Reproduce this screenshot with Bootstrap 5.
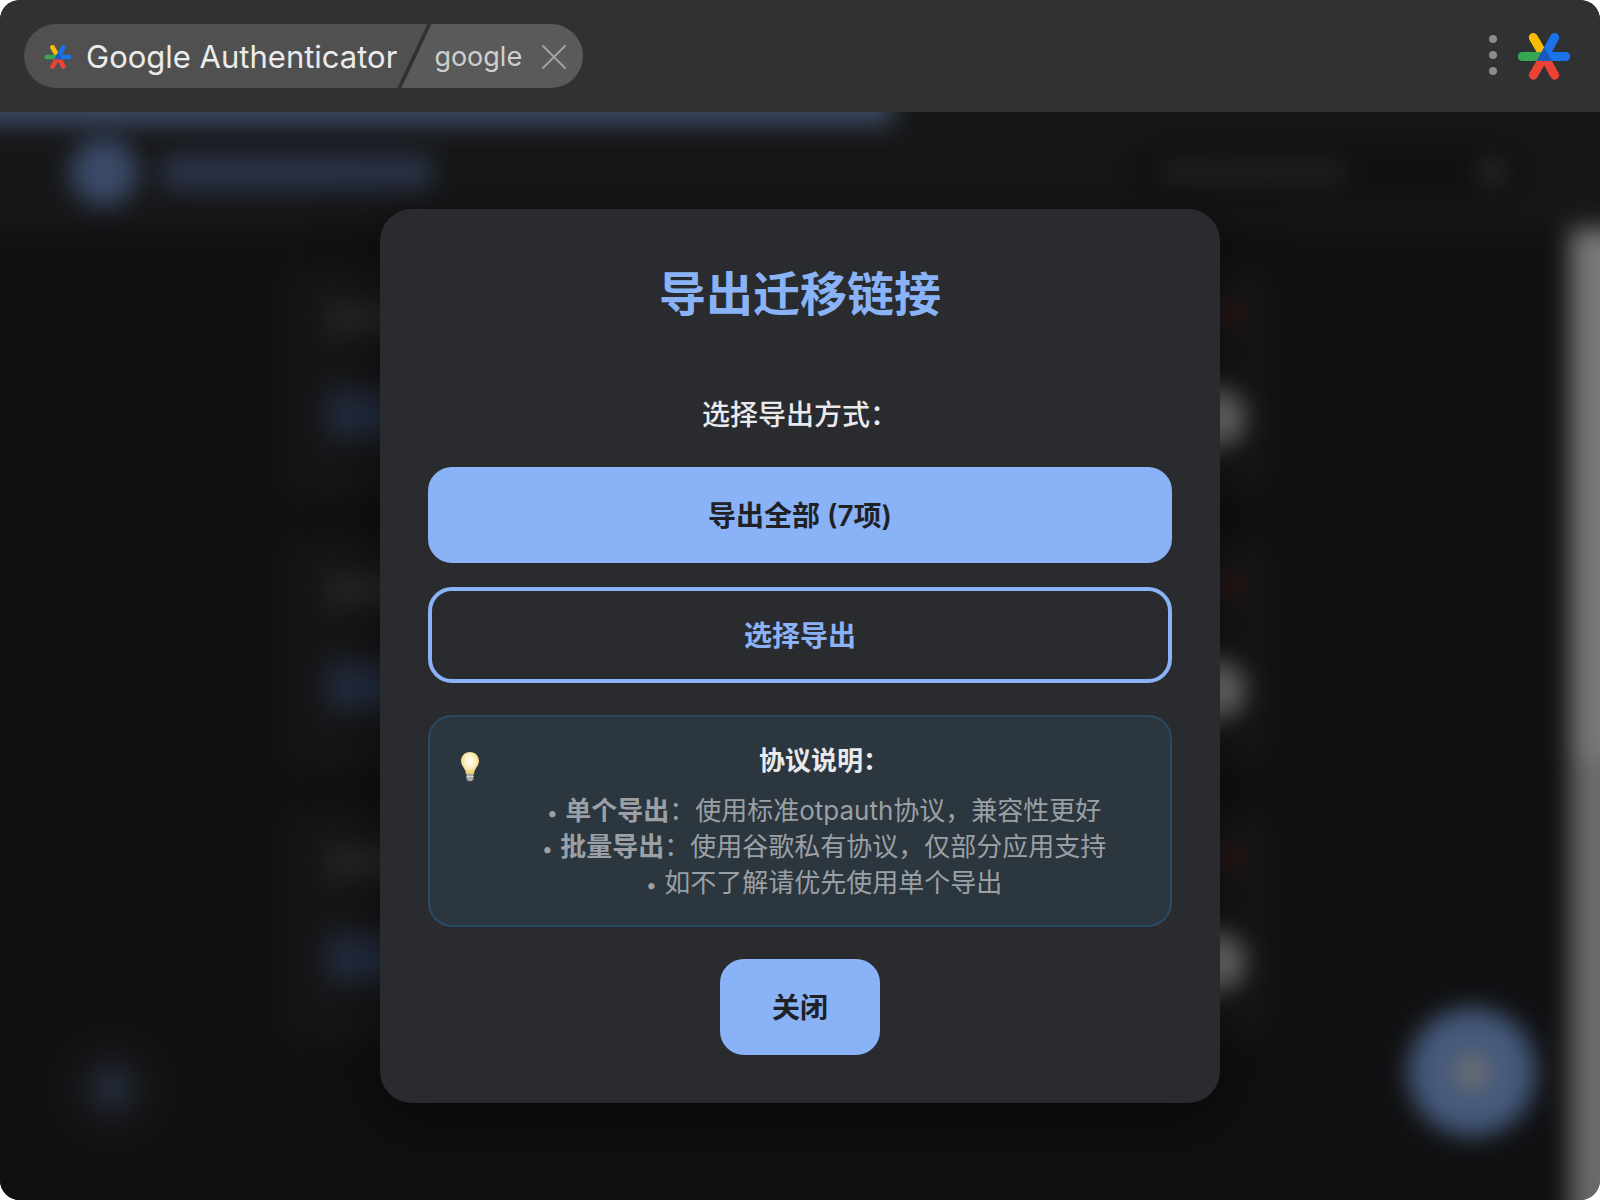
<!DOCTYPE html>
<html lang="zh-CN" data-bs-theme="dark">
<head>
<meta charset="utf-8">
<meta name="viewport" content="width=device-width, initial-scale=1">
<title>Google Authenticator</title>
<link href="https://cdn.jsdelivr.net/npm/bootstrap@5.3.0/dist/css/bootstrap.min.css" rel="stylesheet">
<style>
  html { background: #fff; }
  body { background: #fff; font-family: Inter, "Noto Sans CJK SC", sans-serif; }
  .app-window { min-height: 100vh; border-radius: 20px; background: #202124; }

  /* launcher bar */
  .launcher { background: #303133; padding: 24px; }
  .crumbs { height: 64px; border-radius: 32px; }
  .crumb-app { background: #505050; color: #ebebeb; font-size: 31px; padding: 2px 30px 0 20px; gap: 14px;
    clip-path: polygon(0 0, 100% 0, calc(100% - 30px) 100%, 0 100%); }
  .crumb-query { background: #5a5a5a; color: #cfcfcf; font-size: 27px; margin-left: -26px; padding: 2px 16px 0 33px; gap: 19px;
    clip-path: polygon(30px 0, 100% 0, 100% 100%, 0 100%); }
  .bar-btn { background: none; border: 0; padding: 0; line-height: 0; }
  .bar-tools { gap: 20px; padding-right: 6px; }

  /* stacked layers: blurred page behind, dialog in front */
  .stage { display: grid; overflow: hidden; }
  .stage > * { grid-area: 1 / 1; min-width: 0; }
  /* the page layer bleeds 40px past every side so the blur has no soft rim */
  .page-layer { margin: -40px; background: #202124; filter: blur(12px); }
  .head-strip { background: #2d2e31; }
  .progress-line { height: 52px; width: 932px; background: #7a98cf; }
  .page-head { height: 105px; padding: 0 108px 10px 110px; }
  .ghost-logo { width: 68px; height: 68px; border-radius: 50%; background: #7494cf; }
  .ghost-title { width: 270px; height: 34px; background: #566a90; border-radius: 6px; }
  .ghost-search { width: 400px; height: 64px; border-radius: 32px; background: #202124; padding: 0 24px; }
  .ghost-hint { width: 190px; height: 22px; background: #434343; }
  .ghost-lens { width: 30px; height: 30px; border-radius: 50%; background: #505257; }
  .ghost-list { width: 980px; margin-left: 330px; padding-top: 36px; gap: 40px; }
  .ghost-item { height: 232px; border-radius: 24px; background: #2c2d2f; padding: 38px 26px 49px 38px; }
  .ghost-name { width: 150px; height: 28px; background: #505050; }
  .ghost-code { width: 260px; height: 48px; background: #46587c; margin-bottom: 10px; }
  .ghost-trash { width: 32px; height: 20px; background: #6a2f2a; }
  .ghost-ring { width: 60px; height: 60px; border-radius: 50%; background: #ececec; }
  .ghost-scroll { width: 70px; background: linear-gradient(#f0f0f0 0 526px, #d4d4d4 534px); }
  .float-mini, .float-add { position: absolute; border-radius: 50%; display: grid; place-items: center; }
  .float-mini { left: 104px; bottom: 104px; width: 96px; height: 96px; background: #2c2d30; }
  .float-mini i { width: 40px; height: 40px; border-radius: 50%; background: #48587a; }
  .float-add { right: 104px; bottom: 104px; width: 128px; height: 128px; background: #8ab4f8; }
  .float-add i { width: 36px; height: 36px; border-radius: 50%; background: #dfe0e0; }

  /* dialog */
  .scrim { background: rgba(0,0,0,.5); padding: 97px 16px; z-index: 1; }
  .export-box { width: 840px; max-width: 100%; background: #2a2b2e; border-radius: 32px; padding: 48px;
    color: #e8eaed; box-shadow: 0 16px 64px rgba(0,0,0,.5); }
  .export-box h1 { font-size: 47px; font-weight: 600; line-height: 74px; color: #89b2f7; margin-bottom: 60px; }
  .ask { font-size: 28px; font-weight: 500; line-height: 48px; margin-bottom: 28px; }
  .act { height: 96px; border-radius: 24px; font-size: 28px; font-weight: 600; border-width: 4px; padding: 8px 16px 6px; }
  .act-fill, .act-fill:hover { background: #89b2f7; border-color: #89b2f7; color: #202124; }
  .act-line, .act-line:hover { color: #89b2f7; border-color: #89b2f7; }
  .act-close { width: 160px; }
  .tips { border: 2px solid #2b4a63; border-radius: 24px; background: #2c363e; padding: 24px 28px; margin: 32px 0; gap: 24px;
    font-size: 26px; line-height: 36px; color: #9aa0a6; }
  .tips h2 { font-size: 26px; font-weight: 600; line-height: 40px; color: #e8eaed; margin-bottom: 12px; }
  .tips b { font-weight: 600; }
  .dot { font-size: 20px; line-height: 1; }
  .bulb { margin-top: 10px; }
</style>
<script src="https://cdn.jsdelivr.net/npm/bootstrap@5.3.0/dist/js/bootstrap.bundle.min.js"></script>
</head>
<body>
<svg width="0" height="0" class="position-absolute" aria-hidden="true">
  <symbol id="star" viewBox="174 98 156 140">
    <g stroke-width="27" stroke-linecap="round" fill="none">
      <path d="M220 111L253 168" stroke="#fbbc04"/>
      <path d="M187 168H245" stroke="#34a853"/>
      <path d="M220 224L253 168L284 224" stroke="#ea4335"/>
      <path d="M317 168H253L284 111" stroke="#1a73e8" stroke-linejoin="round"/>
    </g>
    <path d="M253 141L276 181H230Z" fill="#185abc"/>
  </symbol>
</svg>
<div class="app-window d-flex flex-column overflow-hidden">
  <header class="launcher d-flex align-items-center justify-content-between">
    <div class="crumbs d-flex overflow-hidden">
      <div class="crumb-app d-flex align-items-center text-nowrap">
        <svg width="28" height="24" aria-hidden="true"><use href="#star"/></svg>
        <span>Google Authenticator</span>
      </div>
      <div class="crumb-query d-flex align-items-center">
        <span>google</span>
        <button class="bar-btn" type="button" aria-label="清除">
          <svg width="26" height="26" viewBox="0 0 26 26"><path d="M2 2L24 24M24 2L2 24" stroke="#a2a2a2" stroke-width="2" stroke-linecap="round"/></svg>
        </button>
      </div>
    </div>
    <div class="bar-tools d-flex align-items-center">
      <button class="bar-btn" type="button" aria-label="更多">
        <svg width="10" height="44" viewBox="0 0 10 44" fill="#8c8c8c"><circle cx="5" cy="5" r="4"/><circle cx="5" cy="21" r="4"/><circle cx="5" cy="37" r="4"/></svg>
      </button>
      <svg width="52" height="47" aria-hidden="true"><use href="#star"/></svg>
    </div>
  </header>

  <main class="stage flex-grow-1">
    <div class="page-layer position-relative d-flex flex-column" aria-hidden="true">
      <div class="head-strip">
        <div class="progress-line"></div>
        <div class="page-head d-flex align-items-center justify-content-between">
          <div class="d-flex align-items-center gap-4"><div class="ghost-logo"></div><div class="ghost-title"></div></div>
          <div class="ghost-search d-flex align-items-center justify-content-between"><div class="ghost-hint"></div><div class="ghost-lens"></div></div>
        </div>
      </div>
      <div class="d-flex justify-content-between flex-grow-1">
        <div class="ghost-list d-flex flex-column">
          <div class="ghost-item d-flex justify-content-between">
            <div class="d-flex flex-column justify-content-between"><div class="ghost-name"></div><div class="ghost-code"></div></div>
            <div class="d-flex flex-column justify-content-between align-items-end"><div class="ghost-trash"></div><div class="ghost-ring"></div></div>
          </div>
          <div class="ghost-item d-flex justify-content-between">
            <div class="d-flex flex-column justify-content-between"><div class="ghost-name"></div><div class="ghost-code"></div></div>
            <div class="d-flex flex-column justify-content-between align-items-end"><div class="ghost-trash"></div><div class="ghost-ring"></div></div>
          </div>
          <div class="ghost-item d-flex justify-content-between">
            <div class="d-flex flex-column justify-content-between"><div class="ghost-name"></div><div class="ghost-code"></div></div>
            <div class="d-flex flex-column justify-content-between align-items-end"><div class="ghost-trash"></div><div class="ghost-ring"></div></div>
          </div>
        </div>
        <div class="ghost-scroll"></div>
      </div>
      <div class="float-mini"><i></i></div>
      <div class="float-add"><i></i></div>
    </div>

    <div class="scrim d-flex justify-content-center align-items-start">
      <section class="export-box text-center" role="dialog" aria-labelledby="dlg-title">
        <h1 id="dlg-title">导出迁移链接</h1>
        <p class="ask">选择导出方式：</p>
        <div class="d-grid gap-4">
          <button class="btn act act-fill" type="button">导出全部 (7项)</button>
          <button class="btn act act-line" type="button">选择导出</button>
        </div>
        <div class="tips d-flex align-items-start">
          <svg class="bulb flex-shrink-0" width="24" height="32" viewBox="0 0 24 32" aria-hidden="true">
            <defs><radialGradient id="glow" cx=".5" cy=".42" r=".55"><stop offset="0" stop-color="#fffdf2"/><stop offset=".55" stop-color="#fdf0c0"/><stop offset="1" stop-color="#eccb72"/></radialGradient></defs>
            <path d="M12 1C6.500 1 3 5 3 10C3 15 7.500 17 8 23H16C16.500 17 21 15 21 10C21 5 17.500 1 12 1Z" fill="url(#glow)"/>
            <path d="M8.500 23H15.500V28L14 30H10L8.500 28Z" fill="#aaa9a6"/>
            <path d="M8.500 25.500H15.500" stroke="#d6d5d0"/><path d="M10 30.500H14" stroke="#444"/>
          </svg>
          <div class="flex-grow-1">
            <h2>协议说明：</h2>
            <div><span class="dot">•</span> <b>单个导出</b>：使用标准otpauth协议，兼容性更好</div>
            <div><span class="dot">•</span> <b>批量导出</b>：使用谷歌私有协议，仅部分应用支持</div>
            <div><span class="dot">•</span> 如不了解请优先使用单个导出</div>
          </div>
        </div>
        <button class="btn act act-fill act-close" type="button">关闭</button>
      </section>
    </div>
  </main>
</div>
</body>
</html>
